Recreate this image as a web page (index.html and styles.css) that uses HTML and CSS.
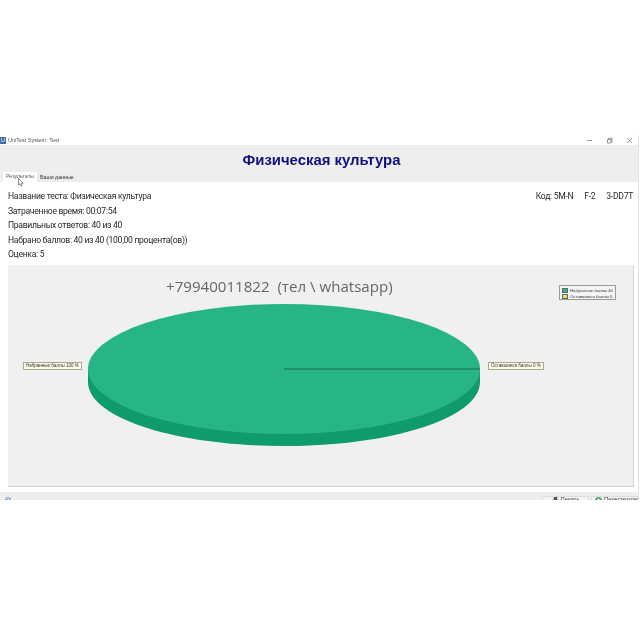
FILE: index.html
```html
<!DOCTYPE html>
<html lang="ru">
<head>
<meta charset="utf-8">
<title>UniTest System: Test</title>
<link rel="stylesheet" href="styles.css">
</head>
<body>
<div class="window">
  <div class="titlebar">
    <span class="app-icon">U</span>
    <span class="app-title">UniTest System: Test</span>
    <span class="controls">
      <svg class="ctl" viewBox="0 0 7 7"><path d="M1 3.5H6" /></svg>
      <svg class="ctl" viewBox="0 0 7 7"><path d="M1.500 2.500H5V6H1.500ZM2.500 2.500V1.200H6V4.800H5" /></svg>
      <svg class="ctl" viewBox="0 0 7 7"><path d="M1 1L6 6M6 1L1 6" /></svg>
    </span>
  </div>
  <div class="header">
    <h1 class="heading">Физическая культура</h1>
    <div class="tabs">
      <span class="tab tab-active">Результаты</span>
      <span class="tab">Ваши данные</span>
    </div>
  </div>
  <div class="content">
    <div class="info">
      <div class="info-top">
        <p class="line">Название теста: Физическая культура</p>
        <p class="code"><span>Код: 5M-N</span><span>F-2</span><span>3-DD7T</span></p>
      </div>
      <p class="line">Затраченное время: 00:07:54</p>
      <p class="line">Правильных ответов: 40 из 40</p>
      <p class="line">Набрано баллов: 40 из 40 (100,00 процента(ов))</p>
      <p class="line">Оценка: 5</p>
    </div>
    <div class="chart">
      <svg class="pie" viewBox="0 0 627 222" aria-hidden="true">
        <path class="pie-side" d="M80 104V117C80 153 168 181 276 181C384 181 472 153 472 117V104Z"/>
        <ellipse class="pie-top" cx="276" cy="104" rx="196" ry="65"/>
        <path class="pie-line" d="M276 104H472"/>
      </svg>
      <div class="phone">+79940011822&nbsp;&nbsp;(тел \ whatsapp)</div>
      <div class="callout callout-left">Набранные баллы 100 %</div>
      <div class="callout callout-right">Оставшиеся баллы 0 %</div>
      <div class="legend">
        <div class="legend-row"><i class="swatch swatch-green"></i>Набранные баллы 40</div>
        <div class="legend-row"><i class="swatch swatch-yellow"></i>Оставшиеся баллы 0</div>
      </div>
    </div>
  </div>
  <div class="footer">
    <span class="help">?</span>
    <span class="buttons">
      <span class="btn btn-print">
        <svg class="btn-icon" viewBox="0 0 8 8"><path fill="#555" d="M2 0H6V3H8V6H6V8H2V6H0V3H2Z"/></svg>Печать
      </span>
      <span class="btn btn-review">
        <svg class="btn-icon" viewBox="0 0 8 8"><circle cx="4" cy="4" r="4" fill="#4fae5a"/><path fill="#fff" d="M3 2H5V3.500H6.500V5H5V6.500H3V5H1.500V3.500H3Z"/></svg>Пересмотреть
      </span>
    </span>
  </div>
</div>
<svg class="cursor" viewBox="0 0 6 9" aria-hidden="true"><path d="M.5.500V7L2 5.700 3 8 4.200 7.500 3.200 5.200H5.200Z"/></svg>
</body>
</html>
```
FILE: styles.css
```css
* { box-sizing: border-box; }
html, body { margin: 0; padding: 0; background: #fff; }
body {
  position: relative;
  width: 640px;
  height: 640px;
  padding-top: 135px;
  font-family: "Liberation Sans", Arial, sans-serif;
  color: #222;
  overflow: hidden;
}
.window {
  width: 639px;
  height: 365px;
  display: flex;
  flex-direction: column;
  border-right: 1px solid #e2e2e2;
  overflow: hidden;
  filter: blur(.3px);
}
.titlebar {
  height: 10px;
  display: flex;
  align-items: center;
  flex: none;
  background: #fff;
}
.app-icon {
  width: 6px;
  height: 7px;
  margin-right: 2px;
  background: #3c6ea8;
  color: #fff;
  font-size: 6px;
  line-height: 7px;
  text-align: center;
  overflow: hidden;
}
.app-title { font-size: 5.500px; color: #555; }
.controls {
  margin-left: auto;
  display: flex;
  gap: 13px;
  padding-right: 5px;
}
.ctl {
  width: 7px;
  height: 7px;
  fill: none;
  stroke: #555;
  stroke-width: .6;
}
.header {
  height: 37px;
  flex: none;
  display: flex;
  flex-direction: column;
  background: #eeeeee;
}
.heading {
  margin: 6px 0 0;
  padding-left: 5px;
  height: 21px;
  font-size: 14.900px;
  line-height: 19px;
  font-weight: bold;
  text-align: center;
  color: #10107e;
}
.tabs {
  display: flex;
  align-items: flex-end;
  margin-top: auto;
  padding-left: 3px;
}
.tab {
  height: 9px;
  padding: 0 3px;
  font-size: 5.300px;
  line-height: 8px;
  color: #333;
  background: #ececec;
}
.tab-active {
  height: 10px;
  background: #fff;
  color: #555;
}
.content {
  flex: 1;
  min-height: 0;
  display: flex;
  flex-direction: column;
  padding: 7px 4px 5px 8px;
  background: #fff;
}
.info { flex: none; height: 76px; }
.info-top { display: flex; justify-content: space-between; }
.line, .code {
  margin: 0;
  height: 14.500px;
  font-family: Roboto, "Liberation Sans", sans-serif;
  font-size: 8.600px;
  letter-spacing: -.3px;
  line-height: 15px;
  color: #2a2a2a;
}
.code { display: flex; gap: 11px; padding-right: 1px; }
.chart {
  position: relative;
  flex: 1;
  min-height: 0;
  background: #f0f0f0;
  border-bottom: 1px solid #d0d0d0;
  border-right: 1px solid #d8d8d8;
}
.pie { display: block; width: 627px; height: 222px; }
.pie-top { fill: #27b487; }
.pie-side { fill: #0f9b6b; }
.pie-line { fill: none; stroke: #14503c; stroke-width: .7; }
.phone {
  position: absolute;
  left: 158px;
  top: 11px;
  font-family: "Open Sans", "Liberation Sans", sans-serif;
  font-size: 15.100px;
  line-height: 20px;
  color: #666;
  white-space: nowrap;
}
.callout {
  position: absolute;
  height: 8px;
  padding: 0 2px;
  font-size: 4.500px;
  line-height: 6px;
  color: #333;
  background: #fbfbe6;
  border: 1px solid #a8a890;
  white-space: nowrap;
}
.callout-left { left: 15px; top: 97px; }
.callout-right { left: 480px; top: 97px; }
.legend {
  position: absolute;
  left: 551px;
  top: 20px;
  width: 57px;
  height: 15px;
  padding: 1px 2px;
  background: #f4f4f4;
  border: 1px solid #999;
  font-size: 4.300px;
  color: #333;
  overflow: hidden;
}
.legend-row {
  display: flex;
  align-items: center;
  gap: 2px;
  height: 6px;
  white-space: nowrap;
}
.swatch {
  flex: none;
  width: 6px;
  height: 5px;
  border: 1px solid #666;
}
.swatch-green { background: #27b487; }
.swatch-yellow { background: #e4de6c; }
.footer {
  height: 8px;
  flex: none;
  display: flex;
  background: #eeeeee;
  overflow: hidden;
}
.help {
  flex: none;
  width: 6px;
  height: 6px;
  margin: 5px 0 0 5px;
  border-radius: 50%;
  background: #8fa6d2;
  color: #fff;
  font-size: 5px;
  line-height: 6px;
  text-align: center;
}
.buttons {
  margin-left: auto;
  display: flex;
  gap: 2px;
  padding-top: 4px;
}
.btn {
  display: flex;
  justify-content: center;
  gap: 2px;
  height: 14px;
  padding-top: 0;
  background: #f4f4f4;
  border: 1px solid #ddd;
  font-size: 5.800px;
  line-height: 5px;
  color: #444;
  white-space: nowrap;
}
.btn-print { width: 47px; }
.btn-review { width: 47px; justify-content: flex-start; padding-left: 3px; }
.btn-icon { width: 7px; height: 7px; flex: none; }
.cursor {
  position: absolute;
  left: 18px;
  top: 178px;
  width: 6px;
  height: 9px;
  fill: #fff;
  stroke: #445;
  stroke-width: .6;
}
```
